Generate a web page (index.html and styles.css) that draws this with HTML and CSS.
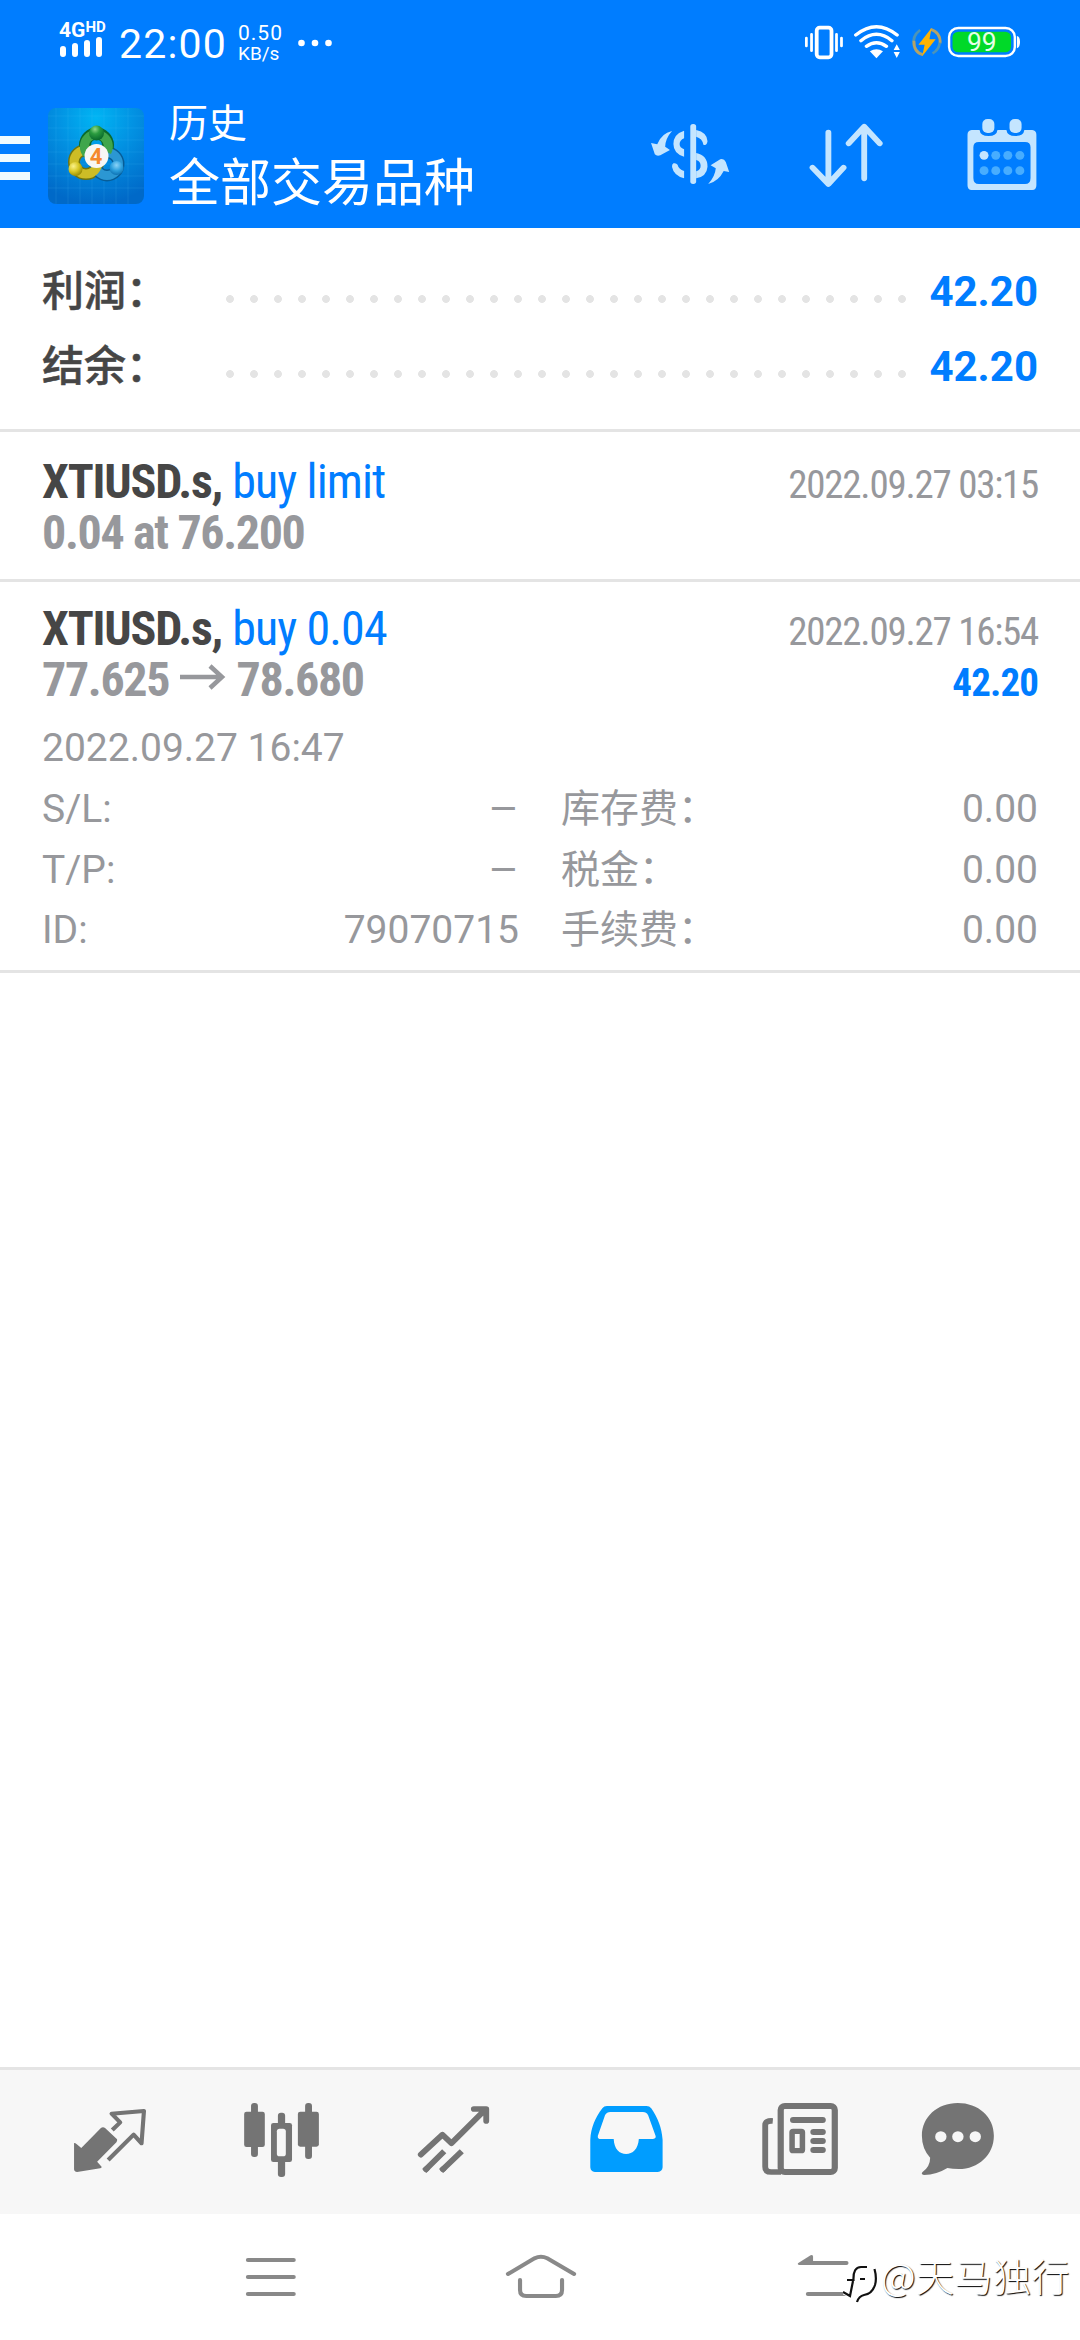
FILE: index.html
```html
<!DOCTYPE html>
<html lang="zh-CN">
<head>
<meta charset="utf-8">
<title>历史</title>
<link rel="stylesheet" href="styles.css">
</head>
<body>
<div class="screen">
  <header class="top">
    <div class="status">
      <div class="network">
        <div class="network-type">4G<sup>HD</sup></div>
        <svg class="signal" width="44" height="20" viewBox="0 0 44 20" fill="none" stroke="#fff" stroke-width="6" stroke-linecap="round"><path d="M4 12V17M16 9V17M28 6V17M40 3V17"/></svg>
      </div>
      <div class="clock">22:00</div>
      <div class="speed"><span>0.50</span><span>KB/s</span></div>
      <svg class="more" width="34" height="8" viewBox="0 0 34 8" fill="#fff"><circle cx="3.500" cy="4" r="3.300"/><circle cx="17" cy="4" r="3.300"/><circle cx="30.500" cy="4" r="3.300"/></svg>
      <svg class="status-icons" width="220" height="50" viewBox="755 60 639 150" preserveAspectRatio="none">
        <rect x="803.500" y="83" width="43" height="89" rx="9" fill="none" stroke="#fff" stroke-width="11"/>
        <path d="M788.500 103V152M861 103V152M773.500 114V138M875.500 114V138" stroke="#fff" stroke-width="8" stroke-linecap="round"/>
        <g fill="none" stroke="#fff" stroke-width="10" stroke-linecap="round"><path d="M917 105Q977 55 1037 105M932 122Q977 84 1022 122M948 139Q977 117 1006 139"/></g>
        <path d="M958 154Q977 141 996 154L977 175Z" fill="#fff"/>
        <path d="M1027 150L1036 133L1045 150ZM1027 156H1045L1036 174Z" fill="#fff"/>
        <g fill="none" stroke-width="8"><path d="M1104 90Q1080 108 1086 137Q1092 158 1112 163" stroke="#4d94b6"/><path d="M1086 122Q1085 157 1112 164" stroke="#b3a367"/><path d="M1134 88Q1164 98 1162 130" stroke="#b3a367"/><path d="M1161 128Q1158 151 1140 160" stroke="#4d94b6"/></g>
        <path d="M1137 84L1099 134H1117L1110 169L1149 118H1131Z" fill="#ffb300"/>
        <rect x="1188" y="84" width="191" height="84" rx="27" fill="none" stroke="#fff" stroke-width="7"/>
        <rect x="1198" y="95" width="170" height="62" rx="17" fill="#00d928"/>
        <path d="M1385 108Q1394 110 1394 126T1385 145Z" fill="#fff"/>
        <text class="battery-level" x="1240" y="153" textLength="86" lengthAdjust="spacingAndGlyphs">99</text>
      </svg>
    </div>
    <div class="appbar">
      <svg class="menu" width="30" height="44" viewBox="0 0 30 44" fill="#f0fbff"><path d="M0 0H30V8H0ZM0 18H30V26H0ZM0 36H30V44H0Z"/></svg>
      <svg class="logo" width="96" height="96" viewBox="0 0 96 96">
        <defs>
          <radialGradient id="tile" cx=".5" cy=".1" r=".9"><stop offset="0" stop-color="#00b5f4"/><stop offset=".45" stop-color="#0291e2"/><stop offset="1" stop-color="#0069c8"/></radialGradient>
          <radialGradient id="green" cx=".4" cy=".25" r=".8"><stop offset="0" stop-color="#8fd98a"/><stop offset=".4" stop-color="#2a9b3f"/><stop offset="1" stop-color="#04632a"/></radialGradient>
          <radialGradient id="yellow" cx=".35" cy=".3" r=".8"><stop offset="0" stop-color="#fbf28a"/><stop offset=".5" stop-color="#d6c622"/><stop offset="1" stop-color="#8a8000"/></radialGradient>
          <radialGradient id="blue" cx=".5" cy=".3" r=".8"><stop offset="0" stop-color="#8bd3f7"/><stop offset=".5" stop-color="#2b9fdd"/><stop offset="1" stop-color="#0563a6"/></radialGradient>
        </defs>
        <rect width="96" height="96" rx="8" fill="url(#tile)"/>
        <path d="M8 0V96M20 0V96M32 0V96M44 0V96M56 0V96M68 0V96M80 0V96M0 8H96M0 20H96M0 32H96M0 44H96M0 56H96M0 68H96M0 80H96" stroke="#5bc8ff" stroke-opacity=".14"/>
        <g fill="none" stroke-width="12"><circle cx="38" cy="54" r="12" stroke="#6f7410"/><circle cx="59" cy="56" r="11.500" stroke="#075d97"/><circle cx="48.500" cy="37" r="11.500" stroke="#0b6a2d"/></g>
        <g fill="none" stroke-width="9"><circle cx="59" cy="56" r="11.500" stroke="#2b97d3"/><circle cx="38" cy="54" r="12" stroke="#cdbd26"/><path d="M39 46A12 12 0 1 1 59 44" stroke="#3fa64c"/></g>
        <circle cx="48.500" cy="25" r="7.500" fill="url(#green)"/><circle cx="27.500" cy="61" r="7" fill="url(#yellow)"/><circle cx="68.500" cy="60" r="7" fill="url(#blue)"/>
        <circle cx="48.500" cy="48" r="12" fill="#f7f7f5"/>
        <text class="logo-digit" x="48" y="56" text-anchor="middle">4</text>
      </svg>
      <div class="heading"><h1>历史</h1><p>全部交易品种</p></div>
      <svg class="action" width="80" height="80" viewBox="319 345 232.300 240" preserveAspectRatio="none" fill="#c4e5ff">
        <rect x="436" y="372" width="17" height="180" rx="8"/>
        <path d="M418 392V415Q405 421 405 432Q405 443 418 448V470Q387 461 387 432Q387 402 418 392ZM453 390Q485 397 486 424Q484 438 474 434Q471 415 453 410ZM453 459Q486 466 486 500Q484 529 453 535V514Q466 510 466 497Q466 484 453 480ZM418 535V513Q402 507 399 494Q395 488 387 490Q382 493 383 501Q388 527 418 535Z"/>
        <path d="M383 393Q352 400 340 433L322 429L333 463Q339 470 349 466L377 450L363 440Q364 415 383 393ZM488 552Q518 544 533 513L549 516L539 486Q534 475 523 478L495 496L510 505Q508 530 488 552Z"/>
      </svg>
      <svg class="action" width="80" height="80" viewBox="772 345 232.300 240" preserveAspectRatio="none" fill="none" stroke="#c4e5ff" stroke-width="17" stroke-linecap="round" stroke-linejoin="round"><path d="M837 398V548M791 503L837 552L881 503M941 535V385M896 430L941 380L986 430"/></svg>
      <svg class="action" width="80" height="80" viewBox="1227 345 232.300 240" preserveAspectRatio="none">
        <path fill="#c4e5ff" fill-rule="evenodd" d="M1255 390H1278Q1280 408 1304 408Q1328 408 1330 390H1356Q1358 408 1382 408Q1406 408 1408 390H1431Q1443 392 1443 404V556Q1443 570 1431 570H1255Q1243 570 1243 556V404Q1243 392 1255 390ZM1276 426Q1260 426 1260 442V534Q1260 552 1276 552H1410Q1426 552 1426 534V442Q1426 426 1410 426Z"/>
        <rect x="1286" y="357" width="35" height="42" rx="15" fill="#c4e5ff"/><rect x="1365" y="357" width="35" height="42" rx="15" fill="#c4e5ff"/>
        <g fill="#47adff"><circle cx="1291" cy="466" r="13" fill="#c4e5ff"/><circle cx="1325" cy="466" r="13"/><circle cx="1360" cy="466" r="13"/><circle cx="1395" cy="466" r="13"/><circle cx="1291" cy="512" r="13"/><circle cx="1325" cy="512" r="13"/><circle cx="1360" cy="512" r="13"/><circle cx="1395" cy="512" r="13"/></g>
      </svg>
    </div>
  </header>

  <main class="content">
    <section class="summary">
      <div class="total"><span class="total-label">利润：</span><span class="dots"></span><b class="total-value">42.20</b></div>
      <div class="total"><span class="total-label">结余：</span><span class="dots"></span><b class="total-value">42.20</b></div>
    </section>
    <section class="deal">
      <div class="line"><div class="symbol"><b>XTIUSD.s,</b> <span>buy limit</span></div><time>2022.09.27 03:15</time></div>
      <div class="line"><div class="price">0.04 at 76.200</div></div>
    </section>
    <section class="deal closed">
      <div class="line"><div class="symbol"><b>XTIUSD.s,</b> <span>buy 0.04</span></div><time>2022.09.27 16:54</time></div>
      <div class="line"><div class="price">77.625 <svg class="arrow" width="46" height="26" viewBox="0 0 46 26" fill="none" stroke="#97989c" stroke-width="4.500"><path d="M0 13H43M30 2L42 13L30 24"/></svg> 78.680</div><b class="profit">42.20</b></div>
      <div class="opened">2022.09.27 16:47</div>
      <div class="details">
        <span>S/L:</span><span class="num dash">–</span><span class="cjk">库存费：</span><span class="num">0.00</span>
        <span>T/P:</span><span class="num dash">–</span><span class="cjk">税金：</span><span class="num">0.00</span>
        <span>ID:</span><span class="num">79070715</span><span class="cjk">手续费：</span><span class="num">0.00</span>
      </div>
    </section>
  </main>

  <nav class="tabs">
    <svg viewBox="174.200 120 290.400 300" preserveAspectRatio="none"><path fill="#747474" d="M215 279Q219 279 223 283L236 294L293 234Q299 229 305 234L340 268Q341 273 338 277L282 335L295 350Q296 354 291 355L224 366Q216 366 215 358Z"/><path fill="none" stroke="#747474" stroke-width="12" stroke-linejoin="round" d="M326 240L349 217L324 191L418 183L411 280L388 254L314 330"/></svg>
    <svg viewBox="673.700 120 290.400 300" preserveAspectRatio="none" fill="#747474"><rect x="729" y="159" width="20" height="162" rx="9"/><rect x="709" y="185" width="60" height="106" rx="7"/><rect x="886" y="159" width="20" height="168" rx="9"/><rect x="865" y="185" width="61" height="105" rx="7"/><rect x="807" y="188" width="21" height="193" rx="9"/><rect x="787" y="219" width="61" height="117" rx="7"/><rect x="804" y="236" width="26" height="83" rx="8" fill="#f7f7f7"/></svg>
    <svg viewBox="1173.200 120 290.400 300" preserveAspectRatio="none" fill="none" stroke="#747474" stroke-width="17" stroke-linejoin="round"><path stroke-linecap="round" d="M1222 314L1285 254L1311 280L1408 180M1376 177H1412V213"/><path d="M1232 363L1290 304M1281 363L1341 304"/><path stroke-linecap="round" d="M1237 358L1239 356M1286 358L1288 356"/></svg>
    <svg viewBox="104.500 120 290.400 300" preserveAspectRatio="none"><path fill="#009dff" fill-rule="evenodd" d="M194 168H309Q318 168 323 175C343 206 353 233 356 269V352Q355 365 342 366H159Q147 365 146 352V269C148 234 160 203 181 175Q186 168 194 168ZM204 186Q194 186 189 195L168 257Q166 267 177 267H214C215 297 231 312 250 312S285 297 287 267H328Q339 266 335 256L314 196Q309 186 299 186Z"/></svg>
    <svg viewBox="604 120 290.400 300" preserveAspectRatio="none"><rect x="699" y="168" width="157" height="198" rx="12" fill="none" stroke="#747474" stroke-width="18"/><path d="M676 213Q654 211 654 226V350Q654 366 671 366H700" fill="none" stroke="#747474" stroke-width="17"/><rect x="732" y="244" width="30" height="58" rx="3" fill="none" stroke="#747474" stroke-width="16"/><path d="M735 210H821M794 246H821M794 273H821M794 300H821" stroke="#747474" stroke-width="18" stroke-linecap="round"/></svg>
    <svg viewBox="1103.500 120 290.400 300" preserveAspectRatio="none"><path fill="#747474" d="M1213 159C1273 159 1318 200 1318 257S1273 357 1216 357Q1198 357 1183 354Q1152 374 1115 375Q1105 373 1111 366Q1133 349 1133 323Q1109 296 1109 257C1109 201 1154 159 1213 159Z"/><g fill="#f7f7f7"><circle cx="1164" cy="260" r="16.500"/><circle cx="1213.500" cy="260" r="16.500"/><circle cx="1264" cy="260" r="16.500"/></g></svg>
  </nav>

  <div class="system-nav">
    <svg viewBox="638.900 600 290.400 180" preserveAspectRatio="none"><path d="M720 630H853M720 681H853M720 732H853"/></svg>
    <svg viewBox="-145.200 600 290.400 180" preserveAspectRatio="none"><path d="M-93 672L-16 625Q3 616 21 625L99 672M-58 690V720Q-58 738 -40 738H46Q64 738 64 720V690"/></svg>
    <svg viewBox="638.900 600 290.400 180" preserveAspectRatio="none"><path d="M778 639H890M778 732H890"/><path d="M749 640L786 616Q793 613 793 620V645H752Q747 643 749 640Z" class="solid"/></svg>
    <div class="watermark">
      <svg width="38" height="50" viewBox="0 0 38 50"><path class="blob" d="M8 9Q16 4 30 8L35 16L34 32L24 44L14 48L8 43L-1 39Q2 33 1 28L1 20Z"/><path d="M4 25H10.500Q10 12 18 12H24M17 24H22M31.500 14Q34 23 32 30Q29 39 21 40Q16 41 14 47M10 26L7 41L0 37"/></svg>
      <span>@天马独行</span>
    </div>
  </div>
</div>
</body>
</html>
```
FILE: styles.css
```css
* { box-sizing: border-box; }
body { margin: 0; background: #fff; }
svg { display: block; flex: none; }
.screen {
  width: 1080px;
  height: 2340px;
  display: flex;
  flex-direction: column;
  font-family: Roboto, "Noto Sans CJK SC", sans-serif;
  color: #97989c;
  overflow: hidden;
}
.top { height: 228px; background: #007dff; color: #fff; flex: none; }

.status { height: 80px; display: flex; align-items: flex-start; padding-left: 59px; }
.network { width: 46px; padding-top: 20px; margin-right: 14px; }
.network-type { height: 17px; font: bold 21px/19px Roboto, sans-serif; white-space: nowrap; }
.network-type sup { font-size: 15px; line-height: 1; vertical-align: 5px; }
.clock { width: 119px; padding-top: 20px; font-size: 41px; line-height: 48px; letter-spacing: 1.200px; }
.speed { width: 60px; display: flex; flex-direction: column; padding-top: 23px; font-size: 19px; line-height: 20px; }
.speed span:first-child { font-size: 21px; line-height: 21px; letter-spacing: 1px; }
.more { margin-top: 39px; }
.status-icons { margin: 20px 60px 0 auto; }
.battery-level { font: 75px Roboto, sans-serif; fill: #e6ffe9; }

.appbar { height: 148px; display: flex; align-items: flex-start; }
.menu { margin-top: 56px; }
.logo { margin: 28px 0 0 18px; }
.logo-digit { font: bold 22px Roboto, sans-serif; fill: #f58a2e; }
.heading { width: 506px; flex: none; padding: 16px 0 0 25px; }
.heading h1 { margin: 0; font-size: 39px; line-height: 56px; font-weight: 400; }
.heading p { margin: 0; font-size: 51px; line-height: 64px; }
.action { margin: 35px 76px 0 0; }
.action:last-child { margin-right: 0; }

.content { flex: 1; }
.summary { height: 204px; padding: 25px 42px 0; border-bottom: 3px solid #e4e4e4; }
.total { height: 75px; display: flex; align-items: center; }
.total-label { width: 176px; margin-top: -6px; font-size: 42px; font-weight: 500; color: #464646; -webkit-text-stroke: .5px #464646; }
.dots { width: 696px; height: 8px; margin-top: 17px; background: radial-gradient(circle, #e4e4e4 3.500px, transparent 4.300px) 0 0 / 24px 8px; }
.total-value { margin: 2px 0 0 auto; font-size: 42px; color: #007dff; }

.deal { height: 150px; padding: 24px 42px 0; border-bottom: 3px solid #e4e4e4; }
.closed { height: 391px; padding-top: 21px; }
.line { height: 51px; display: flex; justify-content: space-between; align-items: baseline; font-family: "Roboto Condensed", Roboto, sans-serif; font-stretch: 75%; line-height: 51px; white-space: nowrap; }
.symbol { font-size: 48px; letter-spacing: -.9px; }
.symbol b { color: #464646; letter-spacing: -1.200px; }
.symbol span { color: #007dff; }
.price { font-size: 48px; font-weight: 700; letter-spacing: -1.350px; }
.arrow { display: inline-block; margin: 0 1px; vertical-align: 6px; }
.line time { font-size: 39px; letter-spacing: -1.250px; }
.profit { font-size: 39px; letter-spacing: -.9px; color: #007dff; }
.opened { margin-top: 13px; font-size: 39px; line-height: 61px; }
.details { display: grid; grid-template-columns: 120px 357px 257px 262px; grid-auto-rows: 60.500px; font-size: 39px; line-height: 61px; }
.details .cjk { padding-left: 42px; }
.num { text-align: right; }
.dash { transform: scaleX(1.200); transform-origin: right; }

.tabs { height: 147px; flex: none; display: flex; padding: 20px 24px 0; border-top: 3px solid #e4e4e4; background: #f7f7f7; }
.tabs svg { width: 100px; height: 100px; margin: 0 36px; }

.system-nav { position: relative; height: 126px; flex: none; display: flex; gap: 170px; padding: 36px 0 0 220px; background: #fff; }
.system-nav > svg { width: 100px; height: 60px; fill: none; stroke: #898989; stroke-width: 12; stroke-linecap: round; }
.system-nav .solid { fill: #898989; stroke: none; }
.watermark { position: absolute; left: 843px; top: 41px; display: flex; align-items: flex-start; color: #fff; font: 300 38px/40px "Noto Sans CJK SC", sans-serif; letter-spacing: .5px; text-shadow: 1px 1px 1px #000; white-space: nowrap; }
.watermark path { fill: none; stroke: #111; stroke-width: 2.200; }
.watermark .blob { fill: #fff; stroke: none; }
```
